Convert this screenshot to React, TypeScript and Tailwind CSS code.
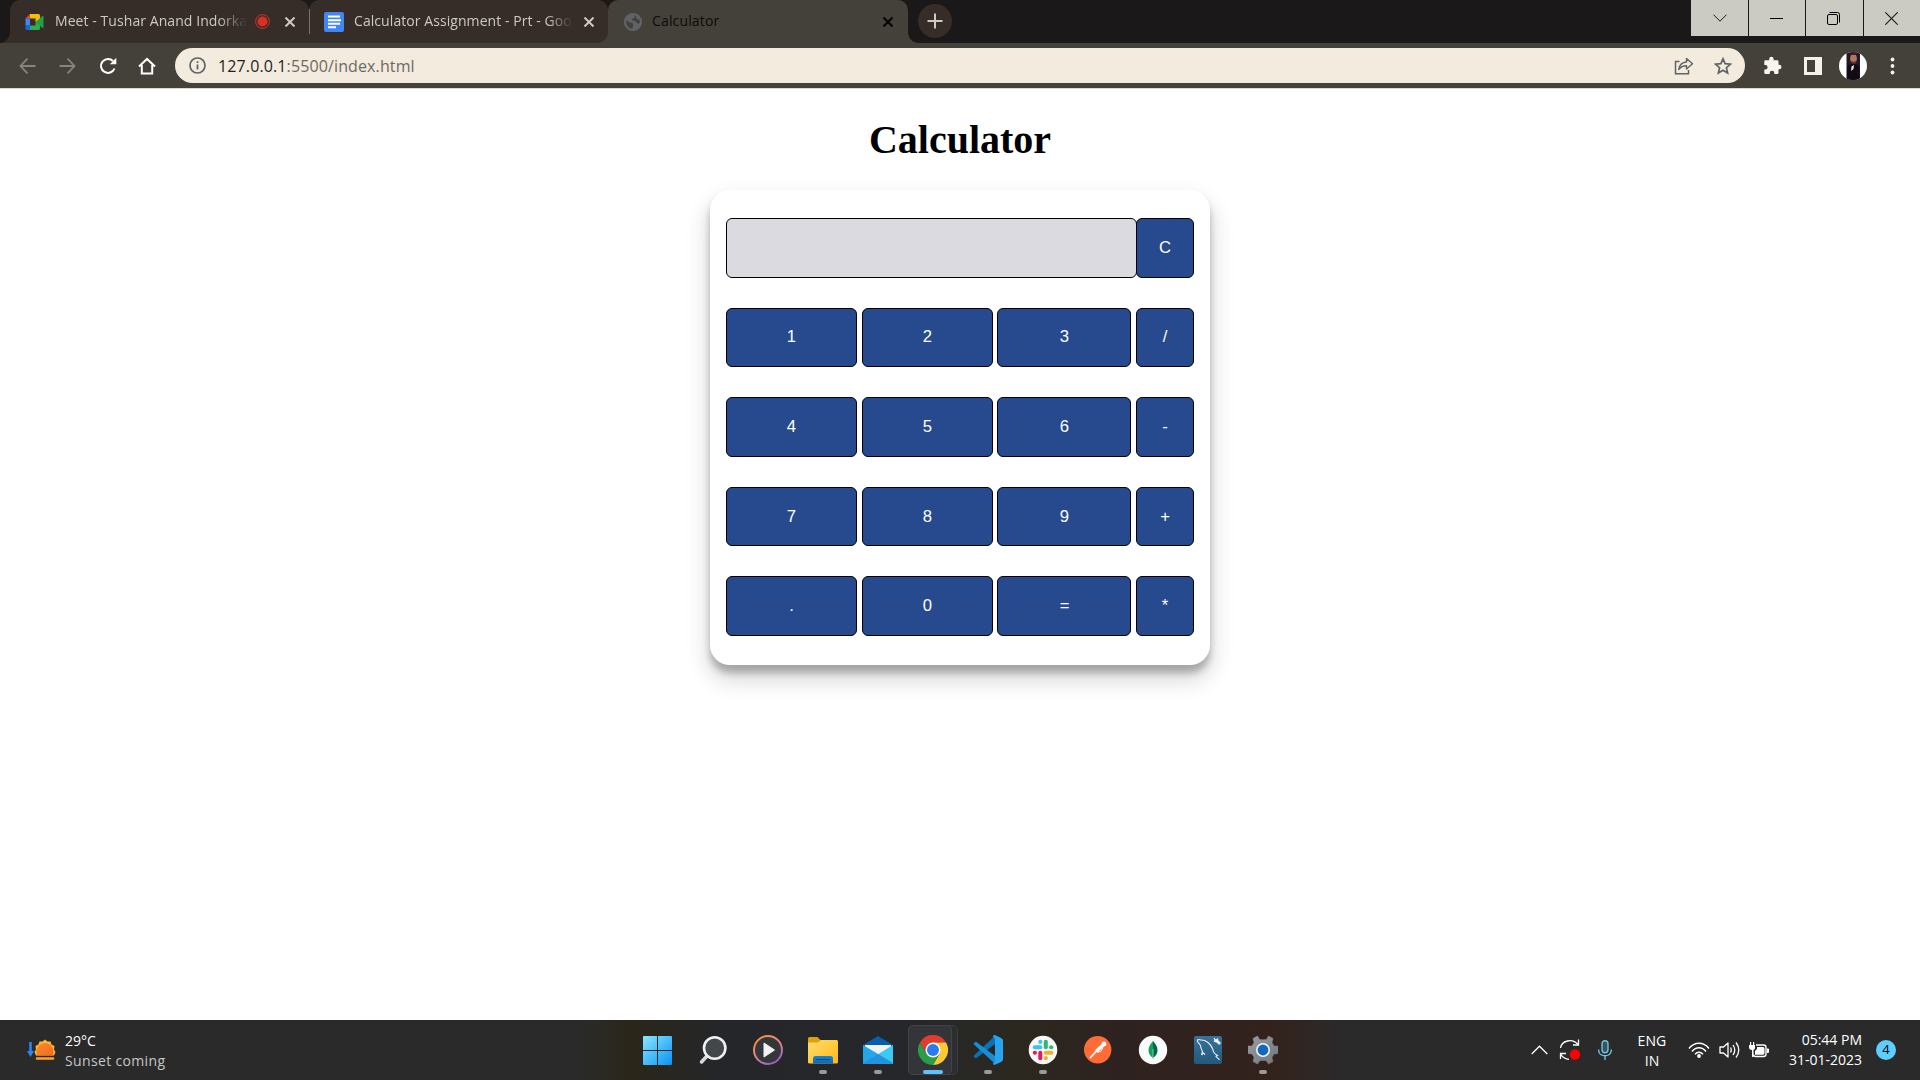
import React from "react";

const ui = "font-['Open_Sans','Noto_Sans',sans-serif]";

/* ---------- Browser tab icons ---------- */

function MeetIcon() {
  return (
    <svg width="19" height="16" viewBox="0 0 19 16">
      <path d="M5 0H13.5Q15 0 15 1.500V6L10.500 8V4.500H5Z" fill="#fbbc04" />
      <path d="M5 0V4.500H0.500Z" fill="#ea4335" />
      <path d="M0.500 4.500H5V11.500H0.500Z" fill="#4285f4" />
      <path d="M0.500 11.500H5V16H2Q.500 16 .500 14.500Z" fill="#1a66d6" />
      <path d="M5 11.500H10.500V8L15 9.500V14.500Q15 16 13.500 16H5Z" fill="#34a853" />
      <path d="M10.500 8L17.500 2Q18.500 1.500 18.500 2.500V13.500Q18.500 14.500 17.500 14Z" fill="#20a047" />
    </svg>
  );
}

function DocsIcon() {
  return (
    <svg width="20" height="20" viewBox="0 0 20 20">
      <rect width="20" height="20" rx="2" fill="#4285f4" />
      <path d="M4 4.500H16M4 8.200H17M4 11.800H16M4 15.300H12" stroke="#fff" strokeWidth="2" />
    </svg>
  );
}

function GlobeIcon() {
  return (
    <svg width="18" height="18" viewBox="0 0 18 18">
      <circle cx="9" cy="9" r="9" fill="#5f6368" />
      <path d="M2 7.500C4.500 8 5 9.500 7 9.800C9 10 9.500 11 9 12.200C8.500 13.200 9.500 14.500 8 16C4.500 15.500 1.800 12.500 2 7.500Z" fill="#44413a" />
      <path d="M8.500 2C11 1.800 12 2.500 11 3.500C10 4 10.500 5 9 5.500C7.500 5.800 8.500 7 7.300 7.500C9.500 7.600 11 7.300 11.500 8.800C12 10 14 9.500 14.500 11L16.200 9C16 5.500 13 2 8.500 2Z" fill="#44413a" />
      <path d="M12 3C11.500 5 12.500 6 14 6.500L15.500 7L14 4Z" fill="#5f6368" />
      <circle cx="9" cy="9" r="8" fill="none" stroke="#5f6368" strokeWidth="2" />
    </svg>
  );
}

function CloseX({ color }: { color: string }) {
  return (
    <svg width="10" height="10" viewBox="0 0 10 10">
      <path d="M.500 .500L9.500 9.500M9.500 .500L.500 9.500" stroke={color} strokeWidth="2" />
    </svg>
  );
}

function TabStrip() {
  return (
    <div className="relative flex h-[43px] bg-[#1a1818]">
      <div className={"flex w-[299px] ml-[10px] items-center rounded-t-[10px] bg-[#362d29] pl-[15px] " + ui}>
        <MeetIcon />
        <div className="ml-[11px] w-[192px] whitespace-nowrap pb-[2px] text-[14px] tracking-[0.07px] text-[#cdc9c4] [mask-image:linear-gradient(to_right,#000_85%,transparent)]">
          Meet - Tushar Anand Indorka
        </div>
        <svg className="ml-[8px] shrink-0" width="15" height="15" viewBox="0 0 15 15">
          <circle cx="7.5" cy="7.5" r="5" fill="#d93025" />
          <circle cx="7.5" cy="7.5" r="6.900" fill="none" stroke="#d93025" strokeWidth="1" />
        </svg>
        <div className="ml-[15px]"><CloseX color="#cdc9c4" /></div>
      </div>
      <div className={"flex w-[299px] items-center rounded-t-[10px] bg-[#362d29] pl-[15px] " + ui}>
        <DocsIcon />
        <div className="ml-[10px] w-[219px] whitespace-nowrap pb-[2px] text-[14px] tracking-[0.07px] text-[#cdc9c4] [mask-image:linear-gradient(to_right,#000_88%,transparent)]">
          Calculator Assignment - Prt - Goo
        </div>
        <div className="ml-[11px]"><CloseX color="#cdc9c4" /></div>
      </div>
      <div className={"flex w-[300px] items-center rounded-t-[10px] bg-[#44413a] pl-[16px] " + ui}>
        <GlobeIcon />
        <div className="ml-[10px] w-[220px] pb-[2px] text-[14px] tracking-[0.15px] text-[#0c0b09]">Calculator</div>
        <div className="ml-[11px]"><CloseX color="#000" /></div>
      </div>
      <div className="ml-[10px] mt-[4px] flex h-[34px] w-[34px] items-center justify-center rounded-full bg-[#362d29]">
        <svg width="16" height="16" viewBox="0 0 16 16">
          <path d="M8 .500V15.500M.500 8H15.500" stroke="#cdc9c4" strokeWidth="2" />
        </svg>
      </div>
      <div className="ml-auto flex h-[36px] gap-px">
        <div className="flex w-[57px] items-center justify-center bg-[#cccbc3]">
          <svg width="14" height="8" viewBox="0 0 14 8"><path d="M.500 .700L7 7.200L13.500 .700" stroke="#1a1818" fill="none" /></svg>
        </div>
        <div className="flex w-[56px] items-center justify-center bg-[#cccbc3]">
          <div className="mr-px h-px w-[13px] bg-black" />
        </div>
        <div className="flex w-[57px] items-center justify-center bg-[#cccbc3]">
          <svg className="mr-[2px]" width="13" height="13" viewBox="0 0 13 13"><rect x=".5" y="2.500" width="10" height="10" rx="1.500" stroke="#000" fill="none" /><path d="M2.500 .500H10.500Q12.500 .500 12.500 2.500V10.500" stroke="#000" fill="none" /></svg>
        </div>
        <div className="flex w-[56px] items-center justify-center bg-[#cccbc3]">
          <svg className="mr-px" width="13" height="13" viewBox="0 0 13 13"><path d="M.300 .300L12.700 12.700M12.700 .300L.300 12.700" stroke="#1a1818" strokeWidth="1.100" /></svg>
        </div>
      </div>
      <div className="absolute left-[309px] top-[9px] h-[25px] w-px bg-[#79716b]" />
      <div className="absolute bottom-0 left-0 h-[10px] w-[10px] bg-[radial-gradient(circle_at_0_0,#1a1818_9.5px,#362d29_10px)]" />
      <div className="absolute bottom-0 left-[598px] h-[10px] w-[10px] bg-[radial-gradient(circle_at_0_0,#362d29_9.5px,#44413a_10px)]" />
      <div className="absolute bottom-0 left-[908px] h-[10px] w-[10px] bg-[radial-gradient(circle_at_10px_0,#1a1818_9.5px,#44413a_10px)]" />
    </div>
  );
}

function Toolbar() {
  return (
    <div className="flex h-[46px] items-center border-b border-[#e3d9c8] bg-[#44413a]">
      <svg className="ml-[19px]" width="17" height="16" viewBox="0 0 17 16"><path d="M8.500 .700L1.500 8L8.500 15.300M1.500 8H16.500" stroke="#86847c" strokeWidth="1.800" fill="none" /></svg>
      <svg className="ml-[23px]" width="17" height="16" viewBox="0 0 17 16"><path d="M8.500 .700L15.500 8L8.500 15.300M15.500 8H.500" stroke="#86847c" strokeWidth="1.800" fill="none" /></svg>
      <svg className="ml-[23px]" width="18" height="18" viewBox="0 0 18 18">
        <path d="M15.500 11.500A7 7 0 1 1 14 4" stroke="#fff" strokeWidth="2" fill="none" />
        <path d="M17.300 .800V7.300H10.800Z" fill="#fff" />
      </svg>
      <svg className="ml-[21px]" width="18" height="18" viewBox="0 0 18 18">
        <path d="M1 9.500L9 1.900L17 9.500M3.800 8V16.500H14.200V8" stroke="#fff" strokeWidth="2" fill="none" />
      </svg>
      <div className={"ml-[19px] flex h-[35px] w-[1570px] items-center rounded-full bg-[#f3ebde] pl-[14px] " + ui}>
        <svg width="17" height="17" viewBox="0 0 17 17">
          <circle cx="8.500" cy="8.500" r="7.500" stroke="#5f6368" strokeWidth="1.700" fill="none" />
          <path d="M8.500 7.500V12.500M8.500 4.300V6.100" stroke="#5f6368" strokeWidth="1.800" />
        </svg>
        <div className="ml-[12px] text-[16px] tracking-[0.12px] text-[#6b6964]"><span className="text-[#1f1f1f]">127.0.0.1</span>:5500/index.html</div>
        <svg className="ml-auto" width="20" height="18" viewBox="0 0 20 18">
          <path d="M5.500 4.500H1.500V16.700H14.500V13" stroke="#5f6368" strokeWidth="1.500" fill="none" />
          <path d="M4.700 12.500C5.500 7.500 8.500 5.300 12.500 5V1.500L18.500 6.800L12.500 12V8.800C9 8.800 6.800 9.800 4.700 12.500Z" stroke="#5f6368" strokeWidth="1.400" fill="none" strokeLinejoin="round" />
        </svg>
        <svg className="ml-[20px] mr-[13px]" width="18" height="18" viewBox="0 0 18 18">
          <path d="M9 1.800L11.100 6.600L16.500 7.100L12.400 10.700L13.600 15.900L9 13.200L4.400 15.900L5.600 10.700L1.500 7.100L6.900 6.600Z" stroke="#5f6368" strokeWidth="1.700" fill="none" />
        </svg>
      </div>
      <svg className="ml-[18px]" width="19" height="19" viewBox="0 0 19 19">
        <path d="M2.500 4.200H6.200V3A2.200 2.200 0 0 1 10.600 3V4.200H14.300Q15.500 4.200 15.500 5.400V8.800H16.300A2.200 2.200 0 0 1 16.300 13.200H15.500V16.800Q15.500 18 14.300 18H11.300V17A2.300 2.300 0 0 0 6.700 17V18H2.500Q1.300 18 1.300 16.800V13.600H2.300A2.300 2.300 0 0 0 2.300 9H1.300V5.400Q1.300 4.200 2.500 4.200Z" fill="#f7f5f0" />
      </svg>
      <svg className="ml-[22px]" width="18" height="18" viewBox="0 0 18 18"><path fillRule="evenodd" d="M0 0H18V18H0ZM3 3V15H11V3Z" fill="#f3f1ec" /></svg>
      <svg className="ml-[17px]" width="28" height="28" viewBox="0 0 28 28">
        <defs><clipPath id="avatar"><circle cx="14" cy="14" r="14" /></clipPath></defs>
        <g clipPath="url(#avatar)">
          <rect width="28" height="28" fill="#fff" />
          <rect x="7.500" width="13.500" height="28" fill="#241a25" />
          <ellipse cx="14.500" cy="6.500" rx="3.400" ry="4.800" fill="#b07765" />
          <path d="M11 5C11 0 18 0 18 5L17 3H12Z" fill="#4a2021" />
          <path d="M12 8.500Q14.500 11 17 8.500L16.500 11.500H13Z" fill="#6b2f2e" />
          <path d="M8 28V15Q11 11.500 14.500 12Q18.500 11.500 20.500 15V28Z" fill="#120b16" />
          <path d="M12.500 14.500L15 13L14.500 17L12 19Z" fill="#e9e4ea" />
        </g>
      </svg>
      <svg className="ml-[23px]" width="5" height="18" viewBox="0 0 5 18">
        <circle cx="2.500" cy="2.500" r="1.900" fill="#f3f1ec" /><circle cx="2.500" cy="9" r="1.900" fill="#f3f1ec" /><circle cx="2.500" cy="15.500" r="1.900" fill="#f3f1ec" />
      </svg>
    </div>
  );
}

/* ---------- Calculator page ---------- */

const key = "flex h-full items-center justify-center rounded-[6px] border border-black bg-[#264a8d] text-[16.67px] text-white";

function KeyRow({ keys, row, pad }: { keys: string[]; row: string; pad: string }) {
  return (
    <div className={"flex " + row}>
      <button className={key + " w-[131px] " + pad}>{keys[0]}</button>
      <button className={key + " ml-[5px] w-[131px] " + pad}>{keys[1]}</button>
      <button className={key + " ml-[4px] w-[134px] pl-px " + pad}>{keys[2]}</button>
      <button className={key + " ml-[5px] w-[58px] " + pad}>{keys[3]}</button>
    </div>
  );
}

function Calculator() {
  return (
    <main className="flex h-[931px] flex-col items-center bg-white">
      <h1 className="mt-[27px] font-['Liberation_Serif',serif] text-[40px] font-bold leading-[48px] text-black">Calculator</h1>
      <div className="mt-[26px] flex h-[475px] w-[500px] flex-col gap-[30px] rounded-[20px] bg-white px-[16px] pt-[28px] font-['Liberation_Sans',sans-serif] shadow-[0_12.5px_25px_rgba(0,0,0,0.19),0_7.5px_7.5px_rgba(0,0,0,0.23)]">
        <div className="flex h-[60px]">
          <div className="w-[411px] rounded-[6px] border border-black bg-[#dbdae0]" />
          <button className={key + " ml-[-1px] w-[58px] pb-px"}>C</button>
        </div>
        <KeyRow keys={["1", "2", "3", "/"]} row="h-[59px]" pad="pb-[3px]" />
        <KeyRow keys={["4", "5", "6", "-"]} row="h-[60px]" pad="pb-px" />
        <KeyRow keys={["7", "8", "9", "+"]} row="h-[59px]" pad="pb-px" />
        <KeyRow keys={[".", "0", "=", "*"]} row="h-[60px]" pad="pb-px" />
      </div>
    </main>
  );
}

/* ---------- Taskbar icons ---------- */

function WindowsIcon() {
  return (
    <svg width="29" height="29" viewBox="0 0 29 29">
      <defs><linearGradient id="win" x1="0" y1="0" x2="1" y2="1"><stop offset="0" stopColor="#8be5ff" /><stop offset="1" stopColor="#0a93f5" /></linearGradient></defs>
      <path d="M1 0H14V14H0V1Q0 0 1 0ZM15 0H28Q29 0 29 1V14H15ZM0 15H14V29H1Q0 29 0 28ZM15 15H29V28Q29 29 28 29H15Z" fill="url(#win)" />
    </svg>
  );
}

function SearchIcon() {
  return (
    <svg width="30" height="30" viewBox="0 0 30 30">
      <path d="M9 21L3.500 27" stroke="#d5d9de" strokeWidth="3.500" strokeLinecap="round" />
      <circle cx="16.700" cy="13" r="10.700" fill="#44474a" stroke="#eef0f2" strokeWidth="2.600" />
    </svg>
  );
}

function MediaIcon() {
  return (
    <svg width="30" height="30" viewBox="0 0 30 30">
      <defs><linearGradient id="media" x1=".2" y1="0" x2=".8" y2="1"><stop offset="0" stopColor="#f7923e" /><stop offset=".5" stopColor="#e0838b" /><stop offset="1" stopColor="#8b5bc7" /></linearGradient></defs>
      <circle cx="15" cy="15" r="14" fill="#34363a" stroke="url(#media)" strokeWidth="2" />
      <path d="M11 8V22L21.500 15Z" fill="#f3f3f3" stroke="#f3f3f3" strokeLinejoin="round" />
    </svg>
  );
}

function FolderIcon() {
  return (
    <svg width="30" height="30" viewBox="0 0 30 30">
      <defs>
        <linearGradient id="folder" x1="0" y1="0" x2="1" y2="1"><stop offset="0" stopColor="#ffdd70" /><stop offset="1" stopColor="#fdb913" /></linearGradient>
        <linearGradient id="folderBase" x1="0" y1="0" x2="0" y2="1"><stop offset="0" stopColor="#1783d2" /><stop offset="1" stopColor="#0f69b7" /></linearGradient>
      </defs>
      <path d="M0 3.500Q0 2 1.500 2H9.500L12.500 5H29V12H0Z" fill="#dfa008" />
      <path d="M0 7.500H10L13 5H28.500Q30 5 30 6.500V27Q30 28.500 28.500 28.500H1.500Q0 28.500 0 27Z" fill="url(#folder)" />
      <path d="M5 28.500V23.500Q5 21 7.500 21H22.500Q25 21 25 23.500V28.500Z" fill="url(#folderBase)" />
      <path d="M8 24.500H22" stroke="#0b4d87" />
    </svg>
  );
}

function MailIcon() {
  return (
    <svg width="30" height="30" viewBox="0 0 30 30">
      <path d="M0 10L15 1L30 10V14H0Z" fill="#075ead" />
      <path d="M2 10H28V18L15 21L2 18Z" fill="#f1f2f2" />
      <path d="M0 10L30 28V29H1.500Q0 29 0 27.500Z" fill="#23a6ea" />
      <path d="M30 10L0 28.500Q.500 29 1.500 29H28.500Q30 29 30 27.500Z" fill="#3bc9f5" />
      <path d="M15 19L30 28Q29.500 29 28.500 29H1.500Q.300 29 0 28Z" fill="#2095dd" />
    </svg>
  );
}

function ChromeIcon() {
  return (
    <svg width="30" height="30" viewBox="0 0 30 30">
      <path d="M2 7.500A15 15 0 0 1 28 7.500H15L8.500 18.750Z" fill="#e33b2e" />
      <path d="M28 7.500A15 15 0 0 1 15 30L21.500 18.750L15 7.500Z" fill="#fcc934" />
      <path d="M15 30A15 15 0 0 1 2 7.500L8.500 18.750H21.500Z" fill="#2a9d48" />
      <circle cx="15" cy="15" r="7.500" fill="#fff" />
      <circle cx="15" cy="15" r="6" fill="#2d79ee" />
    </svg>
  );
}

function CodeIcon() {
  return (
    <svg width="30" height="30" viewBox="0 0 30 30">
      <path d="M1 20.500L21.500 1.200Q22 .500 22 2V9L3.800 22.800Q2.800 23.500 2 22.700L.700 21.500Q.300 21 1 20.500Z" fill="#0c70b7" />
      <path d="M1 9.500L22 28.800V21L3.800 7.200Q2.800 6.500 2 7.300L.700 8.500Q.300 9 1 9.500Z" fill="#178fd6" />
      <path d="M22 29.800C21 30.200 20.500 29.500 20 29L20.800 27Q22 28 22 26V4Q22 2 20.500 3L20 1Q21 -.300 22.300 .300L28.500 3.200Q30 4 30 5.500V24.500Q30 26 28.500 26.800Z" fill="#27a4f2" />
    </svg>
  );
}

function SlackIcon() {
  return (
    <svg width="30" height="30" viewBox="0 0 30 30">
      <circle cx="15" cy="15" r="14.300" fill="#f8f8f8" />
      <g strokeWidth="4" strokeLinecap="round">
        <path d="M6.800 12.300H12.300" stroke="#36c5f0" />
        <path d="M12.300 6.800V7" stroke="#36c5f0" />
        <path d="M17.800 6.800V12.300" stroke="#2eb67d" />
        <path d="M23.300 12.300H23.100" stroke="#2eb67d" />
        <path d="M17.800 17.800H23.300" stroke="#ecb22e" />
        <path d="M17.800 23.300V23.100" stroke="#ecb22e" />
        <path d="M12.300 17.800V23.300" stroke="#e01e5a" />
        <path d="M6.800 17.800H7" stroke="#e01e5a" />
      </g>
    </svg>
  );
}

function PostmanIcon() {
  return (
    <svg width="30" height="30" viewBox="0 0 30 30">
      <circle cx="14.700" cy="14.700" r="13.700" fill="#ff6c37" />
      <circle cx="21" cy="9" r="2.400" fill="#fff" />
      <path d="M19.500 10.500L14 15.500" stroke="#fff" strokeWidth="3.200" strokeLinecap="round" />
      <path d="M14.500 15L7.500 22.500" stroke="#fff" strokeWidth="1.800" strokeLinecap="round" />
      <path d="M20 12.500L18 16L14.500 17.500" stroke="#fff" strokeWidth="1" fill="none" />
    </svg>
  );
}

function MongoIcon() {
  return (
    <svg width="30" height="30" viewBox="0 0 30 30">
      <circle cx="15" cy="15" r="14.200" fill="#f9fbfa" />
      <path d="M15 6C12 9.500 10.500 12 10.500 15.500C10.500 19 13 21.500 15 23Z" fill="#10a05a" />
      <path d="M15 6C18 9.500 19.500 12 19.500 15.500C19.500 19 17 21.500 15 23Z" fill="#00684a" />
      <path d="M15 14V24.500" stroke="#b9cdc3" strokeWidth=".8" />
    </svg>
  );
}

function WorkbenchIcon() {
  return (
    <svg width="30" height="30" viewBox="0 0 30 30">
      <defs><linearGradient id="wb" x1="0" y1="0" x2="0" y2="1"><stop offset="0" stopColor="#3a7199" /><stop offset="1" stopColor="#225a7d" /></linearGradient></defs>
      <rect x="1" y="1" width="28" height="28" rx="2" fill="url(#wb)" />
      <path d="M8.500 20L9.500 16.500C8.500 14.500 7.500 12.500 7.500 10.500L4.500 6.500C4 4.500 5.500 4 7.500 5C12.500 4.500 17.500 8.500 19.500 13.500C20.500 17.500 21 18.500 24.500 20.500L23 21.300L26.500 24.800M8.500 20L10.500 18L12 19.500" stroke="#e7eff4" strokeWidth="1.100" fill="none" />
      <path d="M21 3L23 5L24.500 3.500L25 5.500L27.500 8L26 9.500L23.500 7L21 6.500L22 5Z" fill="#f6f8f9" stroke="#f6f8f9" strokeWidth=".8" />
    </svg>
  );
}

function SettingsIcon() {
  return (
    <svg width="30" height="30" viewBox="0 0 30 30">
      <defs><linearGradient id="gear" x1="0" y1="0" x2="1" y2="1"><stop offset="0" stopColor="#989da1" /><stop offset="1" stopColor="#70767b" /></linearGradient></defs>
      <path d="M11.500 4.500L15 4.800L18.500 4.500L20.500 1L25 3.500L24 7.500L26 11H30V18.500L26 19L24 22.500L25 26.500L20.500 29L18 25.500H12L9.500 29L5 26.500L6 22.500L4 19L0 18.500V11H4L6 7.500L5 3.500L9.500 1Z" fill="url(#gear)" strokeLinejoin="round" stroke="url(#gear)" strokeWidth=".5" />
      <circle cx="15" cy="15" r="7" fill="#f4f5f6" />
      <circle cx="15" cy="15" r="5.400" fill="#1268bd" />
    </svg>
  );
}

const apps: { icon: React.ReactNode; running?: boolean; active?: boolean }[] = [
  { icon: <WindowsIcon /> },
  { icon: <SearchIcon /> },
  { icon: <MediaIcon /> },
  { icon: <FolderIcon />, running: true },
  { icon: <MailIcon />, running: true },
  { icon: <ChromeIcon />, active: true },
  { icon: <CodeIcon />, running: true },
  { icon: <SlackIcon />, running: true },
  { icon: <PostmanIcon /> },
  { icon: <MongoIcon /> },
  { icon: <WorkbenchIcon /> },
  { icon: <SettingsIcon />, running: true },
];

function Taskbar() {
  return (
    <footer className={"flex h-[60px] bg-[linear-gradient(to_right,#2a2a2a_0,#2a2a2a_580px,#2a2619_630px,#25262a_720px,#25272a_920px,#2b281f_1020px,#2e2220_1120px,#33221c_1270px,#2a2a2a_1340px,#2a2a2a_100%)] text-white " + ui}>
      <div className="flex w-[630px] items-center pl-[27px]">
        <svg width="29" height="22" viewBox="0 0 29 22">
          <defs><linearGradient id="sun" x1="0" y1="0" x2="1" y2="1"><stop offset="0" stopColor="#ff8b2c" /><stop offset="1" stopColor="#f06a1c" /></linearGradient></defs>
          <path d="M3.500 3V14" stroke="#2f84f5" strokeWidth="2.600" />
          <path d="M0 12H7L3.500 18Z" fill="#2f84f5" />
          <path d="M9 16.500L7.500 13L9 10.500L8.500 7L11.500 5.500L12.500 2.500L15.500 2.500L18 .500L20.500 2.500L23.500 2.500L24.500 5.500L27.500 7L27 10.500L28.500 13L27 16.500Z" fill="#ffb92c" />
          <path d="M10.500 16.500A8.500 8.500 0 1 1 25.500 16.500Z" fill="url(#sun)" />
          <path d="M10 19.500H26" stroke="#ffa51f" strokeWidth="2.500" strokeLinecap="round" />
        </svg>
        <div className="ml-[9px] pt-[2px] text-[14px] leading-[20px]">
          <div>29°C</div>
          <div className="tracking-[0.35px] text-[#c6c6c6]">Sunset coming</div>
        </div>
      </div>
      <div className="flex w-[660px]">
        {apps.map((app, i) => (
          <div key={i} className="relative flex w-[55px] items-center pl-[13px]">
            {app.active && <div className="absolute left-[3px] top-[5px] h-[50px] w-[50px] rounded-[5px] border border-[#3b3c3f] bg-[#2c2d30]" />}
            {app.active && <div className="absolute left-[3px] top-[5px] h-[50px] w-[44px] rounded-[5px] border border-[#434448] bg-[#343538]" />}
            <div className="relative">{app.icon}</div>
            {app.active && <div className="absolute left-[18px] top-[50px] h-[4px] w-[20px] rounded-full bg-[#5fc3f7]" />}
            {app.running && <div className="absolute left-[24px] top-[50px] h-[4px] w-[8px] rounded-full bg-[#9a9a9a]" />}
          </div>
        ))}
      </div>
      <div className="flex w-[630px] items-center justify-end pr-[24px]">
        <svg width="17" height="10" viewBox="0 0 17 10"><path d="M.700 9L8.500 1.200L16.300 9" stroke="#fff" strokeWidth="1.300" fill="none" /></svg>
        <svg className="ml-[11px]" width="22" height="22" viewBox="0 0 22 22">
          <path d="M1.500 9C2.500 2 13 -1.500 19 5.500M19.500 .500V6H14M1.500 20V14.500H7M1.500 15Q4.500 20 10 20.300" stroke="#fff" strokeWidth="1.300" fill="none" />
          <circle cx="16" cy="15.500" r="5.200" fill="#f00" />
        </svg>
        <svg className="ml-[17px]" width="14" height="20" viewBox="0 0 14 20">
          <rect x="4" y=".700" width="6" height="12" rx="3" stroke="#6fc2dc" strokeWidth="1.400" fill="#35565f" />
          <path d="M.700 9.500V10.500C.700 17.500 13.300 17.500 13.300 10.500V9.500M7 16V20" stroke="#6fc2dc" strokeWidth="1.400" fill="none" />
        </svg>
        <div className="ml-[25px] mr-px w-[30px] pt-px text-center text-[14px] leading-[20px] tracking-[0.1px]">ENG<br />IN</div>
        <svg className="ml-[20px]" width="22" height="18" viewBox="0 0 22 18">
          <path d="M1 7.500C6.500 .500 15.500 .500 21 7.500M4 10.500C8 5.500 14 5.500 18 10.500M7 13.300C9 10.500 13 10.500 15 13.300" stroke="#fff" strokeWidth="1.400" fill="none" />
          <circle cx="11" cy="15" r="1.900" fill="#fff" />
        </svg>
        <svg className="ml-[9px]" width="22" height="18" viewBox="0 0 22 18">
          <path d="M1 6H4.500L9 2V16L4.500 12H1Z" stroke="#fff" strokeWidth="1.300" fill="none" strokeLinejoin="round" />
          <path d="M11.500 6.500Q13 9 11.500 11.500M14 4Q17.500 9 14 14M17 1.500Q22.500 9 17 16.500" stroke="#fff" strokeWidth="1.300" fill="none" />
        </svg>
        <svg className="ml-[8px]" width="20" height="16" viewBox="0 0 20 16">
          <path d="M7 3H14.500Q17 3 17 5.500V12Q17 14.500 14.500 14.500H6.500Q4.500 14.500 4.500 12.500" stroke="#fff" strokeWidth="1.400" fill="none" />
          <path d="M8 5H14Q15.500 5 15.500 6.500V11Q15.500 12.800 14 12.800H6V9L8 7Z" fill="#fff" />
          <path d="M18 6.500H19Q20 6.500 20 7.500V10Q20 11 19 11H18ZM0 3H6V6Q6 7.500 4.500 8V15H3V8Q0 7.500 0 5.500ZM1 0H2.200V3H1ZM4 0H5.200V3H4Z" fill="#fff" />
        </svg>
        <div className="ml-[20px] w-[73px] whitespace-nowrap text-right text-[14px] leading-[20px]">05:44 PM<br />31-01-2023</div>
        <div className="ml-[14px] flex h-[20px] w-[20px] items-center justify-center rounded-full bg-[#60cdff] text-[13px] text-black">4</div>
      </div>
    </footer>
  );
}

export default function App() {
  return (
    <div className="flex h-[1080px] w-[1920px] flex-col overflow-hidden">
      <TabStrip />
      <Toolbar />
      <Calculator />
      <Taskbar />
    </div>
  );
}
